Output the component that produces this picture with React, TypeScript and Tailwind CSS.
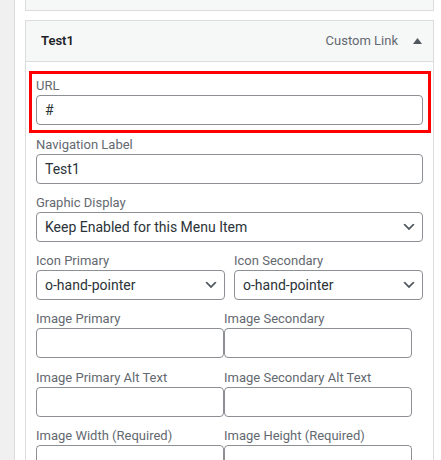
import type { ReactNode } from "react";

const font = { fontFamily: "Roboto, 'Noto Sans', Arial, sans-serif" };

function Label({ children }: { children: ReactNode }) {
  return <div className="text-[13px] leading-[18px] text-[#646970] whitespace-nowrap">{children}</div>;
}

function TextBox({ value = "", w = "w-full" }: { value?: string; w?: string }) {
  return (
    <div
      className={`${w} h-[30px] rounded-[4px] border border-[#8c8f94] bg-white px-[8px] flex items-center text-[14px] text-[#2c3338]`}
    >
      {value}
    </div>
  );
}

function Chevron() {
  return (
    <svg width="16" height="16" viewBox="0 0 20 20" className="shrink-0">
      <path d="M5 6l5 5 5-5 2 1-7 7-7-7 2-1z" fill="#50575e" />
    </svg>
  );
}

function Select({ value }: { value: string }) {
  return (
    <div className="w-full h-[30px] rounded-[4px] border border-[#8c8f94] bg-white pl-[8px] pr-[5px] flex items-center justify-between text-[14px] text-[#2c3338]">
      <span className="whitespace-nowrap">{value}</span>
      <Chevron />
    </div>
  );
}

export default function App() {
  return (
    <div className="flex h-[460px] w-[441px] overflow-hidden bg-white" style={font}>
      {/* left admin strip */}
      <div className="w-[15px] shrink-0 bg-[#f0f0f1] border-r border-[#dcdcde]" />

      <div className="flex-1 pl-[10px] pr-[7px]">
        {/* previous menu item (cut off) */}
        <div className="h-[11px] border border-t-0 border-[#dcdcde] bg-[#f6f7f7]" />

        <div className="mt-[9px] border border-[#dcdcde]">
          {/* header */}
          <div className="h-[41px] border-b border-[#dcdcde] bg-[#f6f7f7] pl-[15px] pr-[11px] flex items-center justify-between">
            <span className="text-[13px] font-semibold text-[#1d2327]">Test1</span>
            <div className="flex items-center gap-[15px]">
              <span className="text-[13px] text-[#646970]">Custom Link</span>
              <svg width="9" height="6" viewBox="0 0 9 6">
                <polygon points="4.5,0 9,6 0,6" fill="#50575e" />
              </svg>
            </div>
          </div>

          {/* body */}
          <div className="px-[10px] pt-[9px] pb-[20px]">
            <div className="ml-[-7px] mr-[-8px] border-[3px] border-[#ff0000] pl-[4px] pr-[5px] pt-[3px] pb-[5px]">
              <Label>URL</Label>
              <TextBox value="#" />
            </div>

            <div className="mt-[3px]">
              <Label>Navigation Label</Label>
              <TextBox value="Test1" />
            </div>

            <div className="mt-[10px]">
              <Label>Graphic Display</Label>
              <Select value="Keep Enabled for this Menu Item" />
            </div>

            <div className="mt-[10px] grid grid-cols-[189px_189px] gap-x-[9px]">
              <div>
                <Label>Icon Primary</Label>
                <Select value="o-hand-pointer" />
              </div>
              <div>
                <Label>Icon Secondary</Label>
                <Select value="o-hand-pointer" />
              </div>
            </div>

            <div className="mt-[10px] flex">
              <div>
                <Label>Image Primary</Label>
                <TextBox w="w-[188px]" />
              </div>
              <div>
                <Label>Image Secondary</Label>
                <TextBox w="w-[188px]" />
              </div>
            </div>

            <div className="mt-[11px] flex">
              <div>
                <Label>Image Primary Alt Text</Label>
                <TextBox w="w-[188px]" />
              </div>
              <div>
                <Label>Image Secondary Alt Text</Label>
                <TextBox w="w-[188px]" />
              </div>
            </div>

            <div className="mt-[10px] flex">
              <div>
                <Label>Image Width (Required)</Label>
                <TextBox w="w-[188px]" />
              </div>
              <div>
                <Label>Image Height (Required)</Label>
                <TextBox w="w-[188px]" />
              </div>
            </div>
          </div>
        </div>
      </div>
    </div>
  );
}
